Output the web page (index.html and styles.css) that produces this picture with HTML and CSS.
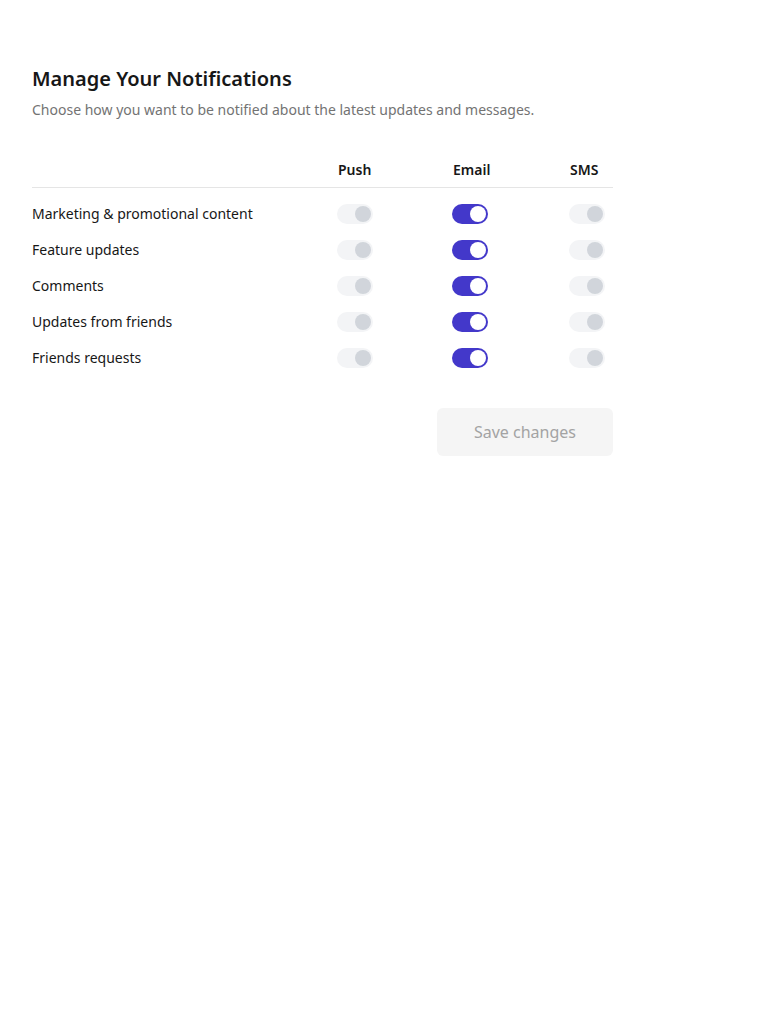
FILE: index.html
```html
<!DOCTYPE html>
<html>
<head>
<meta charset="utf-8">
<link rel="stylesheet" href="styles.css">
</head>
<body>
<main class="panel">
  <h1 class="title">Manage Your Notifications</h1>
  <p class="subtitle">Choose how you want to be notified about the latest updates and messages.</p>
  <div class="table">
    <div class="head">
      <span></span>
      <span class="col">Push</span>
      <span class="col">Email</span>
      <span class="col">SMS</span>
    </div>
    <div class="rows">
      <div class="row"><span class="label">Marketing &amp; promotional content</span><span class="toggle off"></span><span class="toggle on"></span><span class="toggle off"></span></div>
      <div class="row"><span class="label">Feature updates</span><span class="toggle off"></span><span class="toggle on"></span><span class="toggle off"></span></div>
      <div class="row"><span class="label">Comments</span><span class="toggle off"></span><span class="toggle on"></span><span class="toggle off"></span></div>
      <div class="row"><span class="label">Updates from friends</span><span class="toggle off"></span><span class="toggle on"></span><span class="toggle off"></span></div>
      <div class="row"><span class="label">Friends requests</span><span class="toggle off"></span><span class="toggle on"></span><span class="toggle off"></span></div>
    </div>
  </div>
  <div class="actions">
    <button class="save" type="button">Save changes</button>
  </div>
</main>
</body>
</html>
```

FILE: styles.css
```css
* { box-sizing: border-box; }
html, body { margin: 0; background: #ffffff; }
body {
  font-family: "Noto Sans", "Open Sans", sans-serif;
  color: #171717;
}
.panel {
  width: 645px;
  padding: 65px 32px 32px 32px;
}
.title {
  margin: 0;
  font-size: 20px;
  line-height: 28px;
  font-weight: 600;
  color: #171717;
}
.subtitle {
  margin: 7px 0 0 0;
  font-size: 14px;
  line-height: 20px;
  color: #737373;
}
.table {
  margin-top: 40px;
}
.head, .row {
  display: grid;
  grid-template-columns: 305px 115px 117px 44px;
  align-items: center;
}
.head {
  font-size: 14px;
  line-height: 20px;
  font-weight: 600;
  color: #171717;
  padding-bottom: 7px;
  border-bottom: 1px solid #e5e5e5;
}
.col { padding-left: 1px; }
.rows { padding-top: 8px; }
.row {
  height: 36px;
}
.label {
  font-size: 14px;
  line-height: 20px;
  color: #171717;
}
.toggle {
  position: relative;
  display: block;
  width: 36px;
  height: 20px;
  border-radius: 10px;
}
.toggle::after {
  content: "";
  position: absolute;
  top: 2px;
  left: 18px;
  width: 16px;
  height: 16px;
  border-radius: 50%;
}
.toggle.off { background: #f3f4f6; }
.toggle.off::after { background: #d1d5db; }
.toggle.on { background: #4338ca; }
.toggle.on::after { background: #ffffff; }
.actions {
  display: flex;
  justify-content: flex-end;
  margin-top: 32px;
}
.save {
  width: 176px;
  height: 48px;
  border: 0;
  border-radius: 6px;
  background: #f5f5f5;
  color: #a3a3a3;
  font-family: "Noto Sans", "Open Sans", sans-serif;
  font-size: 16px;
  font-weight: 400;
}
```
